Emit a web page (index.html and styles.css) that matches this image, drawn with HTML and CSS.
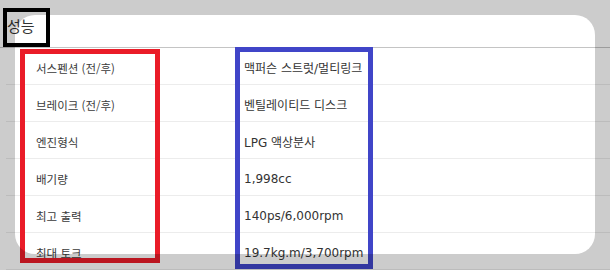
FILE: index.html
```html
<!DOCTYPE html>
<html lang="ko">
<head>
    <meta charset="UTF-8">
    <meta name="viewport" content="width=device-width, initial-scale=1.0">
    <title>성능</title>
    <link rel="stylesheet" href="styles.css">
</head>
<body>
    <div class="spec">
        <!-- Section title -->
        <h2 class="spec-title">성능</h2>

        <!-- Spec rows -->
        <div class="spec-table">
            <div class="spec-row">
                <span class="spec-label">서스펜션 (전/후)</span>
                <span class="spec-value">맥퍼슨 스트럿/멀티링크</span>
            </div>
            <div class="spec-row">
                <span class="spec-label">브레이크 (전/후)</span>
                <span class="spec-value">벤틸레이티드 디스크</span>
            </div>
            <div class="spec-row">
                <span class="spec-label">엔진형식</span>
                <span class="spec-value">LPG 액상분사</span>
            </div>
            <div class="spec-row">
                <span class="spec-label">배기량</span>
                <span class="spec-value">1,998cc</span>
            </div>
            <div class="spec-row">
                <span class="spec-label">최고 출력</span>
                <span class="spec-value">140ps/6,000rpm</span>
            </div>
            <div class="spec-row">
                <span class="spec-label">최대 토크</span>
                <span class="spec-value">19.7kg.m/3,700rpm</span>
            </div>
        </div>
    </div>

    <!-- Marker boxes round the title and the two columns -->
    <div class="mark mark-title"></div>
    <div class="mark mark-labels"></div>
    <div class="mark mark-values"></div>

    <!-- Dim everything outside the highlighted card -->
    <div class="spotlight"></div>
</body>
</html>
```

FILE: styles.css
```css
/* Page base */
html, body {
    margin: 0;
    padding: 0;
    height: 100%;
    overflow: hidden;
}

body {
    position: relative;
    background: #fff;
    font-family: "Noto Sans CJK KR", "Noto Sans", sans-serif;
    color: #333;
}

/* Title bar */
.spec-title {
    margin: 0;
    height: 48px;
    box-sizing: border-box;
    padding: 4px 0 0 7px;
    display: flex;
    align-items: center;
    font-size: 15px;
    font-weight: normal;
    color: #333;
    border-bottom: 1px solid #c4c4c4;
}

/* Rows */
.spec-table {
    margin-left: 6px;
}

.spec-row {
    display: grid;
    grid-template-columns: 238px 1fr;
    height: 37px;
    box-sizing: border-box;
    padding-top: 3px;
    align-items: center;
    border-bottom: 1px solid #ececec;
    font-size: 11.5px;
}

.spec-label {
    padding-left: 30px;
    color: #3a3a3a;
}

.spec-value {
    font-family: "DejaVu Sans", "Noto Sans CJK KR", sans-serif;
    font-size: 12px;
    color: #333;
}

/* Marker boxes */
.mark {
    position: absolute;
    box-sizing: border-box;
}

.mark-title {
    left: 3px;
    top: 8px;
    width: 47px;
    height: 39px;
    border: 4px solid #000;
}

.mark-labels {
    left: 20px;
    top: 49px;
    width: 140px;
    height: 214px;
    border: 5px solid #ea1c28;
}

.mark-values {
    left: 235px;
    top: 47px;
    width: 138px;
    height: 222px;
    border: 5px solid #4045c8;
}

/* Overlay with a rounded cut-out */
.spotlight {
    position: absolute;
    left: 15px;
    top: 15px;
    width: 580px;
    height: 239px;
    border-radius: 20px;
    box-shadow: 0 0 0 1000px rgba(0, 0, 0, 0.2);
}
```
